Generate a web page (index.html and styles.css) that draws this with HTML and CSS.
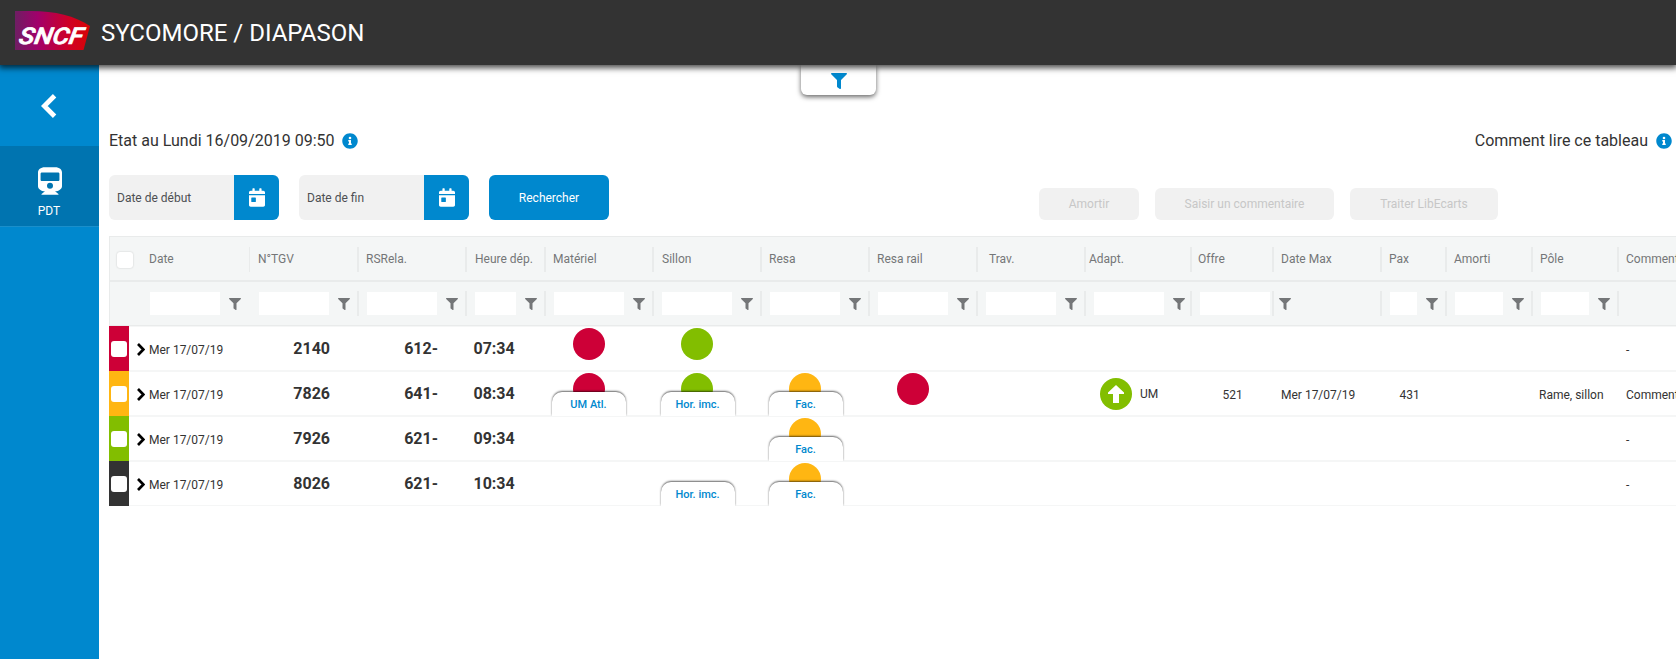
FILE: index.html
```html
<!DOCTYPE html>
<html lang="fr">
<head>
<meta charset="utf-8">
<title>SYCOMORE / DIAPASON</title>
<link rel="stylesheet" href="styles.css">
</head>
<body>
<svg class="sprite" width="0" height="0" aria-hidden="true">
  <symbol id="funnel" viewBox="0 0 512 512"><path d="M488 0H24C3 0-8 26 7 41l185 185v206c0 8 4 15 10 20l80 56c16 11 38 0 38-20V226L505 41c15-15 4-41-17-41z"/></symbol>
  <symbol id="info" viewBox="0 0 512 512"><path d="M256 8C119 8 8 119 8 256s111 248 248 248 248-111 248-248S393 8 256 8zm0 110a42 42 0 1 1 0 84 42 42 0 0 1 0-84zm56 254c0 7-5 12-12 12h-88c-7 0-12-5-12-12v-24c0-7 5-12 12-12h12v-64h-12c-7 0-12-5-12-12v-24c0-7 5-12 12-12h64c7 0 12 5 12 12v100h12c7 0 12 5 12 12z"/></symbol>
  <symbol id="calendar" viewBox="0 0 448 512"><path d="M0 464c0 26 22 48 48 48h352c26 0 48-22 48-48V192H0zm64-192c0-9 7-16 16-16h96c9 0 16 7 16 16v96c0 9-7 16-16 16H80c-9 0-16-7-16-16zM400 64h-48V16c0-9-7-16-16-16h-32c-9 0-16 7-16 16v48H160V16c0-9-7-16-16-16h-32c-9 0-16 7-16 16v48H48C22 64 0 86 0 112v48h448v-48c0-26-22-48-48-48z"/></symbol>
  <symbol id="next" viewBox="0 0 8 13"><path d="M1 1 6.400 6.500 1 12" fill="none" stroke="#000" stroke-width="2.700"/></symbol>
</svg>

<header class="topbar">
  <svg class="logo" viewBox="0 0 75 39" width="75" height="39">
    <defs><linearGradient id="brand"><stop offset="0" stop-color="#6e1e63"/><stop offset=".3" stop-color="#a1006b"/><stop offset=".72" stop-color="#cf0025"/><stop offset="1" stop-color="#d90404"/></linearGradient></defs>
    <path d="M0 0H16C40 0 60 5 75 15L68.500 39H0z" fill="url(#brand)"/>
    <text class="logo-text" transform="translate(3 33) skewX(-10)" textLength="64" lengthAdjust="spacingAndGlyphs">SNCF</text>
  </svg>
  <h1 class="title">SYCOMORE / DIAPASON</h1>
</header>

<div class="body">
  <nav class="sidebar">
    <a class="side-back"><svg width="16" height="24" viewBox="0 0 16 24"><path d="M13.600 1.800 3.300 12l10.300 10.200" fill="none" stroke="#fff" stroke-width="4.800"/></svg></a>
    <a class="side-item">
      <svg width="24" height="28" viewBox="0 0 448 512"><path fill="#fff" d="M448 96v256c0 51-62 96-130 96l63 50c5 4 2 14-5 14H72c-7 0-10-10-5-14l63-50C62 448 0 403 0 352V96C0 45 48 0 128 0h192c81 0 128 45 128 96zm-48 136V120c0-13-11-24-24-24H72c-13 0-24 11-24 24v112c0 13 11 24 24 24h304c13 0 24-11 24-24zM224 290a56 56 0 1 0 0 112 56 56 0 0 0 0-112z"/></svg>
      <span>PDT</span>
    </a>
  </nav>

  <main class="content">
    <a class="filter-tab"><svg class="ico16 blue"><use href="#funnel"/></svg></a>

    <div class="status">
      <span>Etat au Lundi 16/09/2019 09:50</span><svg class="ico16 blue near"><use href="#info"/></svg>
      <span class="push">Comment lire ce tableau</span><svg class="ico16 blue"><use href="#info"/></svg>
    </div>

    <div class="tools">
      <div class="date"><span>Date de début</span><b><svg><use href="#calendar"/></svg></b></div>
      <div class="date"><span>Date de fin</span><b><svg><use href="#calendar"/></svg></b></div>
      <button class="search">Rechercher</button>
      <div class="actions">
        <button class="off w100">Amortir</button>
        <button class="off w179">Saisir un commentaire</button>
        <button class="off w148">Traiter LibEcarts</button>
      </div>
    </div>

    <section class="table">
      <div class="row head titles">
        <div class="cell first thin"><i class="box"></i><span>Date</span></div>
        <div class="cell n8">N°TGV</div>
        <div class="cell">RSRela.</div>
        <div class="cell n8">Heure dép.</div>
        <div class="cell">Matériel</div>
        <div class="cell n8">Sillon</div>
        <div class="cell">Resa</div>
        <div class="cell">Resa rail</div>
        <div class="cell n11">Trav.</div>
        <div class="cell n3">Adapt.</div>
        <div class="cell n6">Offre</div>
        <div class="cell">Date Max</div>
        <div class="cell">Pax</div>
        <div class="cell">Amorti</div>
        <div class="cell">Pôle</div>
        <div class="cell last">Commentaires</div>
      </div>
      <div class="row head filters">
        <div class="cell first none"><i class="field"></i><svg><use href="#funnel"/></svg></div>
        <div class="cell n9"><i class="field"></i><svg><use href="#funnel"/></svg></div>
        <div class="cell"><i class="field"></i><svg><use href="#funnel"/></svg></div>
        <div class="cell"><i class="field f41"></i><svg><use href="#funnel"/></svg></div>
        <div class="cell"><i class="field"></i><svg><use href="#funnel"/></svg></div>
        <div class="cell"><i class="field"></i><svg><use href="#funnel"/></svg></div>
        <div class="cell"><i class="field"></i><svg><use href="#funnel"/></svg></div>
        <div class="cell"><i class="field"></i><svg><use href="#funnel"/></svg></div>
        <div class="cell"><i class="field"></i><svg><use href="#funnel"/></svg></div>
        <div class="cell"><i class="field"></i><svg><use href="#funnel"/></svg></div>
        <div class="cell"><i class="field"></i><svg><use href="#funnel"/></svg></div>
        <div class="cell"></div>
        <div class="cell"><i class="field f27"></i><svg><use href="#funnel"/></svg></div>
        <div class="cell"><i class="field f48"></i><svg><use href="#funnel"/></svg></div>
        <div class="cell"><i class="field f48"></i><svg><use href="#funnel"/></svg></div>
        <div class="cell last"></div>
      </div>

      <div class="row">
        <div class="lead"><span class="stripe red"><i class="box"></i></span><svg><use href="#next"/></svg><span class="txt">Mer 17/07/19</span></div>
        <div class="num">2140</div><div class="num">612-</div><div class="time">07:34</div>
        <div class="state"><i class="dot red"></i></div>
        <div class="state"><i class="dot green"></i></div>
        <div></div><div></div><div></div><div></div><div></div><div></div><div></div><div></div><div></div>
        <div class="txt com">-</div>
      </div>
      <div class="row">
        <div class="lead"><span class="stripe amber"><i class="box"></i></span><svg><use href="#next"/></svg><span class="txt">Mer 17/07/19</span></div>
        <div class="num">7826</div><div class="num">641-</div><div class="time">08:34</div>
        <div class="state"><i class="dot red"></i><span class="tag t6">UM Atl.</span></div>
        <div class="state"><i class="dot green"></i><span class="tag">Hor. imc.</span></div>
        <div class="state"><i class="dot amber"></i><span class="tag">Fac.</span></div>
        <div class="state"><i class="dot red"></i></div>
        <div></div>
        <div class="adapt"><i class="dot green"><svg width="16" height="18" viewBox="0 0 16 18"><path fill="#fff" d="M8 0 16 7.600V9h-5v9H5V9H0V7.600z"/></svg></i><span>UM</span></div>
        <div class="txt offer">521</div>
        <div class="txt com">Mer 17/07/19</div>
        <div class="txt pax">431</div>
        <div></div>
        <div class="txt pole">Rame, sillon</div>
        <div class="txt com">Commentaire</div>
      </div>
      <div class="row">
        <div class="lead"><span class="stripe green"><i class="box"></i></span><svg><use href="#next"/></svg><span class="txt">Mer 17/07/19</span></div>
        <div class="num">7926</div><div class="num">621-</div><div class="time">09:34</div>
        <div></div><div></div>
        <div class="state"><i class="dot amber"></i><span class="tag">Fac.</span></div>
        <div></div><div></div><div></div><div></div><div></div><div></div><div></div><div></div>
        <div class="txt com">-</div>
      </div>
      <div class="row">
        <div class="lead"><span class="stripe dark"><i class="box"></i></span><svg><use href="#next"/></svg><span class="txt">Mer 17/07/19</span></div>
        <div class="num">8026</div><div class="num">621-</div><div class="time">10:34</div>
        <div></div>
        <div class="state"><span class="tag">Hor. imc.</span></div>
        <div class="state"><i class="dot amber"></i><span class="tag">Fac.</span></div>
        <div></div><div></div><div></div><div></div><div></div><div></div><div></div><div></div>
        <div class="txt com">-</div>
      </div>
    </section>
  </main>
</div>
</body>
</html>
```
FILE: styles.css
```css
* { box-sizing: border-box; }
body {
  margin: 0;
  height: 659px;
  display: flex;
  flex-direction: column;
  overflow: hidden;
  background: #fff;
  color: #333;
  font: 12px/16px Roboto, "Liberation Sans", sans-serif;
}
.sprite { position: absolute; }
button { border: 0; font: inherit; padding: 0; }

.topbar {
  position: relative;
  z-index: 2;
  flex: none;
  height: 65px;
  display: flex;
  align-items: center;
  gap: 11px;
  padding: 0 15px 4px;
  background: #333;
  box-shadow: 0 2px 6px 1px rgba(0, 0, 0, .7);
}
.logo-text { font: italic 500 23px Roboto, sans-serif; fill: #fff; stroke: #fff; stroke-width: .7; }
.title { margin: 4px 0 0; color: #fff; font-size: 24px; line-height: 30px; font-weight: 400; }

.body { flex: 1; display: flex; min-height: 0; }
.sidebar { flex: none; width: 99px; background: #0088ce; }
.side-back { height: 81px; display: flex; align-items: center; justify-content: center; padding: 1px 1px 0 0; }
.side-item {
  height: 81px;
  display: flex;
  flex-direction: column;
  align-items: center;
  gap: 8px;
  padding: 21px 0 0 1px;
  background: #0074b0;
  border-bottom: 1px solid #1a8fcb;
  color: #fff;
}
.side-item span { margin-right: 2px; }

.content { position: relative; flex: 1; min-width: 0; padding: 67px 0 0 10px; overflow: hidden; }
.ico16 { width: 16px; height: 16px; flex: none; }
.blue { fill: #0088ce; }
.filter-tab {
  position: absolute;
  top: 0;
  left: 702px;
  width: 75px;
  height: 30px;
  padding: 8px 0 0 30px;
  border-radius: 0 0 6px 6px;
  background: #fff;
  box-shadow: 0 2px 5px rgba(0, 0, 0, .6);
}
.filter-tab svg { display: block; }

.status { display: flex; align-items: center; gap: 8px; height: 18px; padding-right: 4px; font-size: 16px; line-height: 18px; }
.near { margin-left: -1px; }
.push { margin-left: auto; }

.tools { display: flex; gap: 20px; margin-top: 25px; height: 45px; }
.date { display: flex; width: 170px; height: 45px; border-radius: 6px; overflow: hidden; background: #f1f1f1; color: #4d4f53; line-height: 46px; }
.date span { width: 125px; padding-left: 8px; }
.date b { flex: 1; display: flex; align-items: center; justify-content: center; background: #0088ce; }
.date svg { width: 16px; height: 19px; fill: #fff; }
.search { width: 120px; height: 45px; border-radius: 6px; background: #0088ce; color: #fff; }
.actions { display: flex; gap: 16px; margin: 13px 178px 0 auto; }
.off { height: 32px; border-radius: 6px; background: #f1f1f1; color: #c7c7c7; }
.w100 { width: 100px; }
.w179 { width: 179px; }
.w148 { width: 148px; }

.table { margin-top: 16px; }
.row {
  display: grid;
  grid-template-columns: 141px 109px 108px 79px 108px 108px 108px 108px 108px 106px 82px 108px 65px 86px 86px 1fr;
  height: 45px;
  overflow: hidden;
  box-shadow: inset 0 1px #f5f6f6, inset 0 -1px #f5f6f6;
}
.head {
  background: #f4f6f6;
  box-shadow: inset 1px 0 #e9ebeb, inset 0 1px #e9ebeb, inset 0 -1px #e9ebeb;
  color: #747678;
}
.cell {
  display: flex;
  align-items: center;
  min-width: 0;
  height: 25px;
  margin-top: 11px;
  padding-left: 7px;
  border-right: 2px solid #e9ebeb;
  line-height: 24px;
  white-space: nowrap;
}
.titles .cell { padding-bottom: 2px; }
.first { padding-left: 8px; gap: 16px; }
.thin { border-right-width: 1px; }
.none, .last { border-right: 0; }
.n8 { padding-left: 8px; }
.n6 { padding-left: 6px; }
.n11 { padding-left: 11px; }
.n3 { padding-left: 3px; }
.filters .cell { margin-top: 10px; padding-left: 8px; gap: 9px; }
.filters .n9 { padding-left: 9px; }
.filters .first { padding-left: 41px; }
.filters svg { flex: none; width: 12px; height: 12px; fill: #747678; }
.field { flex: none; width: 70px; height: 23px; background: #fff; }
.f41 { width: 41px; }
.f27 { width: 27px; }
.f48 { width: 48px; }
.box { width: 16px; height: 16px; border-radius: 3px; background: #fff; }
.head .box { margin-top: 3px; box-shadow: 0 0 2px rgba(0, 0, 0, .2); }

.lead { display: flex; align-items: center; height: 45px; }
.lead svg { width: 8px; height: 13px; margin: 1px 4px 0 8px; }
.lead .txt { padding-top: 2px; }
.stripe { display: flex; align-items: center; justify-content: center; width: 20px; height: 45px; padding-top: 1px; }
.red { background: #cd0037; }
.green { background: #82be00; }
.amber { background: #ffb612; }
.dark { background: #333; }
.num, .time { font-size: 16px; line-height: 45px; font-weight: 700; }
.num { text-align: right; padding-right: 29px; }
.time { padding-left: 6.5px; }
.txt { line-height: 48px; white-space: nowrap; }
.com { padding-left: 7px; }
.offer { padding-left: 30.5px; }
.pax { padding-left: 17.5px; }
.pole { padding-left: 6px; }

.state { display: flex; flex-direction: column; padding: 2px 0 0 27px; height: 45px; }
.dot { flex: none; width: 32px; height: 32px; border-radius: 50%; }
.tag {
  position: relative;
  width: 74px;
  height: 24px;
  margin: auto 0 0 -20px;
  padding-right: 1px;
  border-radius: 10px 10px 0 0;
  background: #fff;
  box-shadow: 0 -1px 2px rgba(0, 0, 0, .6);
  color: #0088ce;
  font-size: 11px;
  line-height: 25px;
  font-weight: 500;
  text-align: center;
}
.dot + .tag { margin-top: -13px; }
.t6 { margin-left: -21px; }
.adapt { display: flex; align-items: center; gap: 8px; height: 45px; padding-left: 14px; }
.adapt .dot { display: flex; align-items: center; justify-content: center; }
```
